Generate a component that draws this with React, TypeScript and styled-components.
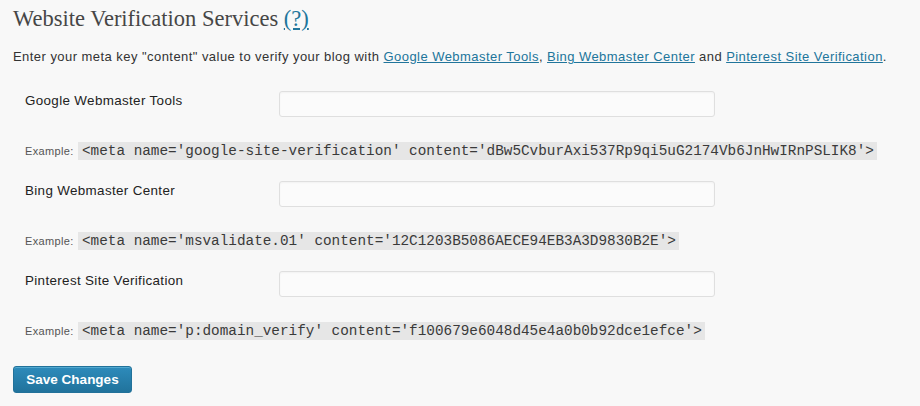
import React from "react";
import styled, { createGlobalStyle } from "styled-components";

const Global = createGlobalStyle`
  html, body { margin: 0; padding: 0; background: #f8f8f8; }
  body { font-family: "Liberation Sans", Arial, sans-serif; color: #333; }
`;

const Page = styled.div`
  width: 920px;
  height: 406px;
  box-sizing: border-box;
  padding: 4px 0 0 13px;
  background: #f8f8f8;
`;

const Heading = styled.h2`
  margin: 0;
  font-family: "Liberation Serif", "Times New Roman", serif;
  font-weight: normal;
  font-size: 22.5px;
  line-height: 30px;
  color: #464646;
`;

const Link = styled.a`
  color: #21759b;
  text-decoration: underline;
`;

const Intro = styled.p`
  margin: 13px 0 0;
  font-size: 13px;
  letter-spacing: 0.45px;
  line-height: 20px;
  color: #333;
`;

const Fields = styled.div`
  display: flex;
  flex-direction: column;
  margin-top: 24px;
  padding-left: 12px;
`;

const Field = styled.div`
  display: flex;
  flex-direction: column;
  margin-bottom: 21px;
`;

const Row = styled.div`
  display: grid;
  grid-template-columns: 254px 436px;
  align-items: center;
  height: 26px;
`;

const Label = styled.label`
  font-size: 13.4px;
  letter-spacing: 0.35px;
  color: #222;
  margin-top: -8px;
`;

const Input = styled.input`
  box-sizing: border-box;
  height: 26px;
  width: 436px;
  border: 1px solid #dfdfdf;
  border-radius: 3px;
  background: #fbfbfb;
  box-shadow: inset 0 1px 2px rgba(0,0,0,0.04);
`;

const Example = styled.div`
  display: flex;
  align-items: center;
  margin-top: 25px;
  height: 18px;
`;

const ExampleLabel = styled.span`
  font-size: 11px;
  letter-spacing: 0.35px;
  color: #555;
  width: 53px;
`;

const Code = styled.code`
  font-family: "Liberation Mono", "DejaVu Sans Mono", monospace;
  font-size: 14.35px;
  line-height: 18px;
  padding: 0 3px 0 4px;
  background: #e6e6e6;
  color: #3a3a3a;
`;

const Button = styled.button`
  margin-top: 5px;
  width: 119px;
  height: 27px;
  border: 1px solid #22729a;
  border-radius: 3px;
  background: linear-gradient(#2d8bbb, #21739c);
  color: #fff;
  font-family: "Liberation Sans", Arial, sans-serif;
  font-weight: bold;
  font-size: 13.5px;
  padding: 0;
  box-shadow: inset 0 1px 0 rgba(120,200,230,0.5);
`;

const fields = [
  {
    label: "Google Webmaster Tools",
    code: "<meta name='google-site-verification' content='dBw5CvburAxi537Rp9qi5uG2174Vb6JnHwIRnPSLIK8'>",
  },
  {
    label: "Bing Webmaster Center",
    code: "<meta name='msvalidate.01' content='12C1203B5086AECE94EB3A3D9830B2E'>",
  },
  {
    label: "Pinterest Site Verification",
    code: "<meta name='p:domain_verify' content='f100679e6048d45e4a0b0b92dce1efce'>",
  },
];

export default function App() {
  return (
    <Page>
      <Global />
      <Heading>
        Website Verification Services <Link href="#">(?)</Link>
      </Heading>
      <Intro>
        Enter your meta key "content" value to verify your blog with{" "}
        <Link href="#">Google Webmaster Tools</Link>,{" "}
        <Link href="#">Bing Webmaster Center</Link> and{" "}
        <Link href="#">Pinterest Site Verification</Link>.
      </Intro>
      <Fields>
        {fields.map((f) => (
          <Field key={f.label}>
            <Row>
              <Label>{f.label}</Label>
              <Input type="text" />
            </Row>
            <Example>
              <ExampleLabel>Example:</ExampleLabel>
              <Code>{f.code}</Code>
            </Example>
          </Field>
        ))}
      </Fields>
      <Button>Save Changes</Button>
    </Page>
  );
}
